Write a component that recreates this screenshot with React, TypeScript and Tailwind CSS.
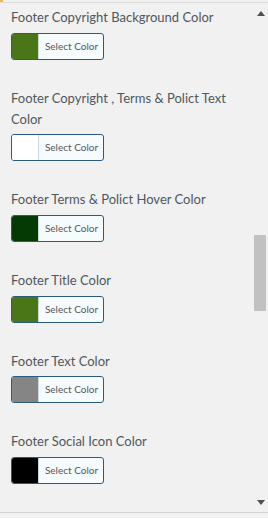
import React from "react";

const items = [
  { label: "Footer Copyright Background Color", color: "#4a7618" },
  { label: "Footer Copyright , Terms & Polict Text Color", color: "#ffffff" },
  { label: "Footer Terms & Polict Hover Color", color: "#063a04" },
  { label: "Footer Title Color", color: "#4a7618" },
  { label: "Footer Text Color", color: "#858585" },
  { label: "Footer Social Icon Color", color: "#000000" },
];

export default function App() {
  return (
    <div
      className="w-[268px] h-[518px] bg-[#f1f1f1] flex flex-col overflow-hidden"
      style={{ fontFamily: 'Lato, "Open Sans", sans-serif' }}
    >
      <div className="h-[3px] flex border-b border-[#dcdcdc]">
        <div className="w-[3px] h-[2px] bg-[#f0b849]" />
      </div>
      <div className="flex flex-1 min-h-0 border-b border-[#d4d4d4]">
        <div className="flex-1 flex flex-col pl-[11px] pt-[4px]">
          {items.map((it) => (
            <div key={it.label} className="flex flex-col mb-[28.2px]">
              <div className="text-[13px] leading-[21px] text-[#50575e] pr-[10px] mb-[4.5px]">
                {it.label}
              </div>
              <div className="flex w-[93px] h-[27px] rounded-[3px] border border-[#2c5a7e] overflow-hidden bg-[#f6fbfd]">
                <div
                  className="w-[27px] h-full border-r border-[#c9d4dc]"
                  style={{ backgroundColor: it.color }}
                />
                <div className="flex-1 flex items-center justify-center text-[10px] text-[#50575e] pl-[1px]">
                  Select Color
                </div>
              </div>
            </div>
          ))}
        </div>
        <div className="w-[14px] flex flex-col items-center pt-[8px] pb-[7px]">
          <svg width="8" height="5" viewBox="0 0 8 5">
            <path d="M0 5 L4 0 L8 5 Z" fill="#505050" />
          </svg>
          <div className="flex-1 w-full flex flex-col pt-[219px]">
            <div className="w-[12px] h-[76px] bg-[#c1c1c1]" />
          </div>
          <svg width="8" height="5" viewBox="0 0 8 5">
            <path d="M0 0 L4 5 L8 0 Z" fill="#505050" />
          </svg>
        </div>
      </div>
      <div className="h-[5px] bg-[#f3f3f3]" />
    </div>
  );
}
